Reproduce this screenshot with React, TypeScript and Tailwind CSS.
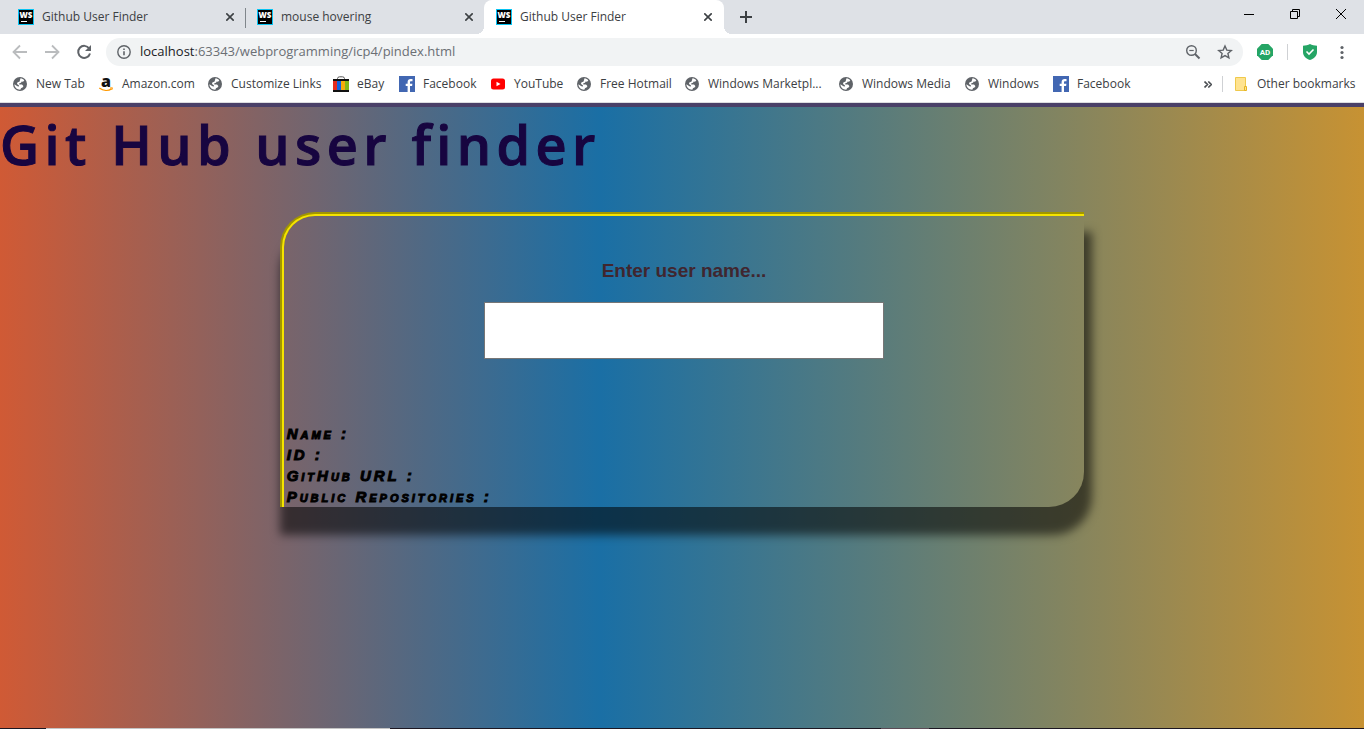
import type { ReactNode } from "react";

type IconName = "globe" | "amazon" | "ebay" | "facebook" | "youtube";

const tabs = [
  { title: "Github User Finder", active: false },
  { title: "mouse hovering", active: false },
  { title: "Github User Finder", active: true },
];

const bookmarks: { label: string; icon: IconName; width: string }[] = [
  { label: "New Tab", icon: "globe", width: "w-[86px]" },
  { label: "Amazon.com", icon: "amazon", width: "w-[109px]" },
  { label: "Customize Links", icon: "globe", width: "w-[126px]" },
  { label: "eBay", icon: "ebay", width: "w-[66px]" },
  { label: "Facebook", icon: "facebook", width: "w-[91px]" },
  { label: "YouTube", icon: "youtube", width: "w-[86px]" },
  { label: "Free Hotmail", icon: "globe", width: "w-[108px]" },
  { label: "Windows Marketpl...", icon: "globe", width: "w-[154px]" },
  { label: "Windows Media", icon: "globe", width: "w-[126px]" },
  { label: "Windows", icon: "globe", width: "w-[89px]" },
  { label: "Facebook", icon: "facebook", width: "w-[91px]" },
];

function WebStormIcon() {
  return (
    <svg viewBox="0 0 16 16" className="size-4 shrink-0" aria-hidden="true">
      <rect width="16" height="16" fill="#07c3f2" />
      <rect x="1" y="1" width="14" height="14" fill="#000" />
      <text x="8" y="8.6" textAnchor="middle" fontFamily="Open Sans, sans-serif" fontSize="8" fontWeight="800" fill="#fff">
        WS
      </text>
      <rect x="3" y="12" width="6" height="1" fill="#fff" />
    </svg>
  );
}

function BookmarkIcon({ name }: { name: IconName }) {
  if (name === "amazon") {
    return (
      <svg viewBox="0 0 16 16" className="size-4 shrink-0 overflow-visible" aria-hidden="true">
        <text x="8" y="10.5" textAnchor="middle" fontFamily="Open Sans, sans-serif" fontSize="16" fontWeight="800" fill="#111">
          a
        </text>
        <path d="M1.3 12c4 3 9 3 12.3.8" fill="none" stroke="#f90" strokeWidth="1.4" />
        <path d="m12 12 2.400-.2-.5 2" fill="none" stroke="#f90" />
      </svg>
    );
  }
  if (name === "ebay") {
    return (
      <svg viewBox="0 0 16 16" className="size-4 shrink-0" aria-hidden="true">
        <path d="M4.500 4V2.500Q4.500 1 6.500.8h3q2 .2 2 1.700V4" fill="none" stroke="#555" />
        <path fill="#111" d="M0 3h16v2H0zM0 14h16v2H0z" />
        <path fill="#e62b1e" d="M0 5h4v9H0z" />
        <path fill="#1263e0" d="M4 5h4v9H4z" />
        <path fill="#f6ae0b" d="M8 5h4v9H8z" />
        <path fill="#83b81a" d="M12 5h4v9h-4z" />
      </svg>
    );
  }
  if (name === "facebook") {
    return (
      <svg viewBox="0 0 16 16" className="size-4 shrink-0" aria-hidden="true">
        <path fill="#4267b2" d="M0 0h16v16H0z" />
        <path fill="#fff" d="M8.600 16V10H6.700V7.700h1.900V6c0-2 1.200-3.100 3-3.100.9 0 1.700.1 1.900.1v2.200h-1.300c-1 0-1.200.5-1.200 1.200v1.300h2.400l-.3 2.300H11v6z" />
      </svg>
    );
  }
  if (name === "youtube") {
    return (
      <svg viewBox="0 0 16 16" className="size-4 shrink-0" aria-hidden="true">
        <rect x="1" y="2.5" width="14" height="11" rx="2.5" fill="#f00" />
        <path fill="#fff" d="m6.500 5.700 4 2.300-4 2.300z" />
      </svg>
    );
  }
  return (
    <svg viewBox="0 0 16 16" className="size-4 shrink-0" aria-hidden="true">
      <circle cx="8" cy="8" r="7" fill="#5f6368" />
      <path fill="#fff" d="M8.500 2.300C10 2.400 11.500 3.300 12.300 4.500L11 5.700 9.700 5.500 9 6.700 7.300 7.300v1.200H10l1.200 1.200v1.400L9 12.200 8.300 13.700C5 13.800 2.500 11.500 2.400 8.300l3 2 1.700.2-.3-1.300L5 8l.3-1.600L7.600 5.600 8 4z" />
    </svg>
  );
}

function CloseIcon() {
  return (
    <svg viewBox="0 0 8 8" className="size-2" aria-hidden="true">
      <path d="m.3.3 7.400 7.400m0-7.400L.3 7.700" stroke="#3c4043" strokeWidth="1.600" />
    </svg>
  );
}

function ToolButton({ label, children, className = "" }: { label: string; children: ReactNode; className?: string }) {
  return (
    <button type="button" aria-label={label} className={`flex shrink-0 items-center justify-center ${className}`}>
      {children}
    </button>
  );
}

function TabStrip() {
  return (
    <div className="flex h-[34px] bg-[#dee1e6] pl-[6px]">
      {tabs.map((tab, i) => (
        <div
          key={i}
          className={`relative flex h-[34px] shrink-0 items-center gap-2 pl-3 text-[12px] text-[#3c4043] ${
            tab.active ? "w-[240px] rounded-t-lg bg-white pr-2" : "w-[239px] pr-[7px]"
          }`}
        >
          <WebStormIcon />
          <span className="grow truncate">{tab.title}</span>
          <ToolButton label="Close tab" className="size-4">
            <CloseIcon />
          </ToolButton>
          {i === 0 && <span className="absolute top-2 -right-px h-5 w-px bg-[#80868b]" />}
          {tab.active && (
            <>
              <span className="absolute bottom-0 -left-2 size-2 bg-[radial-gradient(circle_at_0_0,#dee1e6_8px,white_8px)]" />
              <span className="absolute -right-2 bottom-0 size-2 bg-[radial-gradient(circle_at_100%_0,#dee1e6_8px,white_8px)]" />
            </>
          )}
        </div>
      ))}
      <ToolButton label="New tab" className="ml-2 w-7">
        <svg viewBox="0 0 12 12" className="size-3" aria-hidden="true">
          <path d="M6 0v12M0 6h12" stroke="#3c4043" strokeWidth="2" />
        </svg>
      </ToolButton>
      <div className="ml-auto flex h-7">
        <ToolButton label="Minimize" className="w-[46px]">
          <svg viewBox="0 0 10 10" className="size-[10px]" aria-hidden="true">
            <path d="M0 5.500h10" stroke="#000" />
          </svg>
        </ToolButton>
        <ToolButton label="Restore" className="w-[46px]">
          <svg viewBox="0 0 10 10" className="size-[10px]" aria-hidden="true">
            <path d="M.5 2.500h7v7h-7zM2.500 2.500v-2h7v7h-2" fill="none" stroke="#000" />
          </svg>
        </ToolButton>
        <ToolButton label="Close" className="w-[46px]">
          <svg viewBox="0 0 10 10" className="size-[10px]" aria-hidden="true">
            <path d="m0 0 10 10M10 0 0 10" stroke="#000" />
          </svg>
        </ToolButton>
      </div>
    </div>
  );
}

function Toolbar() {
  return (
    <div className="flex h-9 items-center bg-white pr-[14px] pl-3">
      <ToolButton label="Back" className="w-4">
        <svg viewBox="0 0 16 16" className="size-4" aria-hidden="true">
          <path d="M15 8H2M8 1.500 1.500 8 8 14.500" fill="none" stroke="#babcbe" strokeWidth="1.800" />
        </svg>
      </ToolButton>
      <ToolButton label="Forward" className="ml-4 w-4">
        <svg viewBox="0 0 16 16" className="size-4" aria-hidden="true">
          <path d="M1 8h13M8 1.500 14.500 8 8 14.500" fill="none" stroke="#babcbe" strokeWidth="1.800" />
        </svg>
      </ToolButton>
      <ToolButton label="Reload" className="ml-4 w-4">
        <svg viewBox="0 0 16 16" className="size-4" aria-hidden="true">
          <path d="M13.200 4.500A6 6 0 1 0 14 9.500" fill="none" stroke="#5f6368" strokeWidth="2" />
          <path d="M15 1v6H9z" fill="#5f6368" />
        </svg>
      </ToolButton>
      <div className="ml-[14px] flex h-7 grow items-center rounded-full bg-[#f1f3f4] pr-[10px] pl-[11px]">
        <svg viewBox="0 0 14 14" className="size-[14px] shrink-0" aria-hidden="true">
          <circle cx="7" cy="7" r="6.200" fill="none" stroke="#5f6368" strokeWidth="1.400" />
          <path d="M7 6.200v4M7 3.500V5" stroke="#5f6368" strokeWidth="1.600" />
        </svg>
        <a href="#top" className="ml-[9px] grow text-[13px] whitespace-nowrap text-[#6b6f74]">
          <span className="text-[#202124]">localhost</span>:63343/webprogramming/icp4/pindex.html
        </a>
        <ToolButton label="Zoom" className="w-4">
          <svg viewBox="0 0 16 16" className="size-4" aria-hidden="true">
            <circle cx="6.500" cy="6.500" r="4.800" fill="none" stroke="#5f6368" strokeWidth="1.400" />
            <path d="m10 10 4.500 4.500" stroke="#5f6368" strokeWidth="1.900" />
            <path d="M4.300 6.500h4.400" stroke="#5f6368" strokeWidth="1.200" />
          </svg>
        </ToolButton>
        <ToolButton label="Bookmark this page" className="ml-4 w-4">
          <svg viewBox="0 0 16 16" className="size-4" aria-hidden="true">
            <path d="m8 2 1.800 4.100 4.500.4-3.400 3 1 4.400L8 11.600l-3.900 2.300 1-4.400-3.400-3 4.500-.4z" fill="none" stroke="#5f6368" strokeWidth="1.400" />
          </svg>
        </ToolButton>
      </div>
      <ToolButton label="Ad blocker" className="ml-[14px] w-4">
        <svg viewBox="0 0 16 16" className="size-4" aria-hidden="true">
          <path d="M4.700 0h6.600L16 4.700v6.600L11.300 16H4.700L0 11.300V4.700z" fill="#25a565" />
          <text x="8" y="11" textAnchor="middle" fontFamily="Roboto, sans-serif" fontSize="8" fontWeight="700" fill="#fff">
            AD
          </text>
        </svg>
      </ToolButton>
      <span className="ml-[14px] h-4 w-px bg-[#cfd1d4]" />
      <ToolButton label="Site safety" className="ml-[14px] w-4">
        <svg viewBox="0 0 16 16" className="size-4" aria-hidden="true">
          <path d="M8 0c2 1.200 4.500 1.700 7 1.700V8c0 4-3 6.600-7 8-4-1.400-7-4-7-8V1.700C3.500 1.700 6 1.200 8 0" fill="#25a565" />
          <path d="m4.500 7.500 2.500 2.600 4.500-4.700" fill="none" stroke="#fff" strokeWidth="1.500" />
        </svg>
      </ToolButton>
      <ToolButton label="Menu" className="ml-4 w-4">
        <svg viewBox="0 0 16 16" className="size-4" aria-hidden="true">
          <g fill="#5f6368">
            <circle cx="8" cy="3.500" r="1.600" />
            <circle cx="8" cy="8.500" r="1.600" />
            <circle cx="8" cy="13.500" r="1.600" />
          </g>
        </svg>
      </ToolButton>
    </div>
  );
}

function BookmarksBar() {
  return (
    <nav aria-label="Bookmarks" className="flex h-[33px] items-start border-b border-[#dcdde0] bg-white pr-2 pl-3 text-[12px] leading-4 text-[#3c4043]">
      <div className="flex grow pt-[6px]">
        {bookmarks.map((b, i) => (
          <a key={i} href="#top" className={`flex shrink-0 gap-2 whitespace-nowrap ${b.width}`}>
            <BookmarkIcon name={b.icon} />
            {b.label}
          </a>
        ))}
      </div>
      <div className="flex items-center pt-[6px]">
        <ToolButton label="More bookmarks" className="w-4">
          <svg viewBox="0 0 8 7" className="h-[7px] w-2" aria-hidden="true">
            <path d="m.5.500 3 3-3 3M4.300.500l3 3-3 3" fill="none" stroke="#4a4e52" strokeWidth="1.600" />
          </svg>
        </ToolButton>
        <span className="mr-[10px] ml-[6px] h-4 w-px bg-[#cfd1d4]" />
        <a href="#top" className="flex w-[123px] gap-2 whitespace-nowrap">
          <svg viewBox="0 0 16 16" className="size-4 shrink-0" aria-hidden="true">
            <path d="M2.500 1.500h10v13h-10z" fill="#ffe390" stroke="#efc94c" />
            <path d="M11.500 10.500h2v4h-2z" fill="#ffe390" stroke="#e6b422" />
          </svg>
          Other bookmarks
        </a>
      </div>
    </nav>
  );
}

export default function App() {
  return (
    <div id="top" className="flex min-h-screen flex-col font-['Open_Sans',sans-serif]">
      <header>
        <TabStrip />
        <Toolbar />
        <BookmarksBar />
      </header>
      <main className="grow border-t-4 border-[#4a4068] bg-[linear-gradient(to_right,#d05a35,#1a6fa5_44%,#c79233)] font-['Liberation_Sans',Arial,sans-serif]">
        <h1 className="pt-[2px] font-['Comic_Sans_MS','Open_Sans',cursive] text-[54px] leading-[70px] font-semibold tracking-widest text-[#170540] [-webkit-text-stroke:1px_#170540]">
          Git Hub user finder
        </h1>
        <section className="mx-auto mt-[33px] w-[59%] rounded-tl-[35px] rounded-br-[35px] border-t-4 border-r-0 border-b-0 border-l-4 [border-style:groove] border-[#f5e400] shadow-[4px_24px_10px_4px_rgba(0,0,0,0.55)]">
          <form className="flex flex-col items-center pt-[43px]">
            <label htmlFor="user" className="text-[19px] leading-6 font-bold text-[#40262f]">
              Enter user name...
            </label>
            <input id="user" type="text" className="mt-[19px] h-[57px] w-1/2 border border-[#767676] bg-white px-3 text-lg" />
          </form>
          <div className="mt-16 pl-[3px] font-['Arial_Black','Liberation_Sans',sans-serif] text-[15px] leading-[21px] font-black tracking-[3px] text-black italic [font-variant:small-caps] [-webkit-text-stroke:1px_black]">
            <p>Name :</p>
            <p>ID :</p>
            <p>GitHub URL :</p>
            <p>Public Repositories :</p>
          </div>
        </section>
      </main>
      <footer className="flex h-px bg-[#1c1722]">
        <span className="ml-[46px] w-[344px] bg-[#c4c4c4]" />
        <span className="ml-[491px] w-12 bg-[#5a4a55]" />
      </footer>
    </div>
  );
}
